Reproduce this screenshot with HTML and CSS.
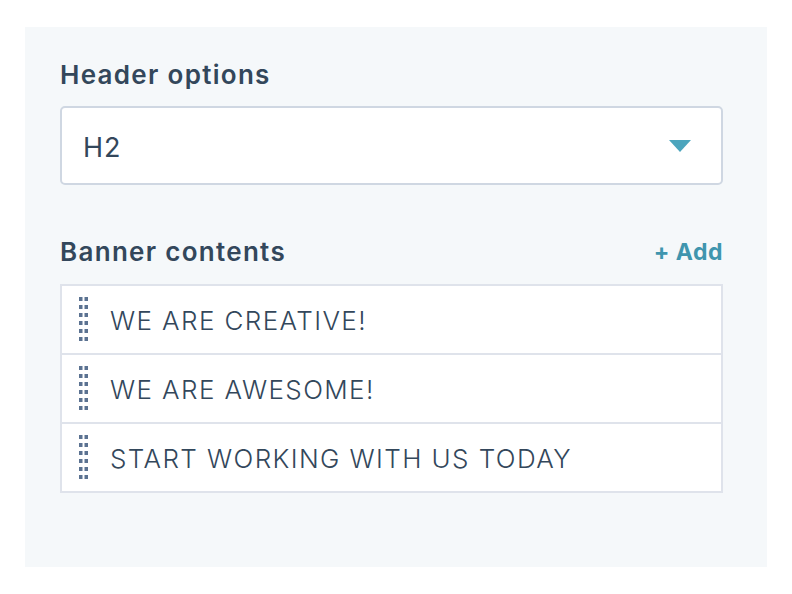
FILE: index.html
```html
<!DOCTYPE html>
<html>
<head>
<meta charset="utf-8">
<link rel="stylesheet" href="styles.css">
</head>
<body>
<div class="panel">
  <div class="field">
    <div class="label">Header options</div>
    <div class="select">
      <span class="select-value">H2</span>
      <svg class="caret" width="22" height="12" viewBox="0 0 22 12"><polygon points="0,0 22,0 11,12" fill="#4ca5bd"/></svg>
    </div>
  </div>
  <div class="field field-list">
    <div class="list-head">
      <div class="label">Banner contents</div>
      <a class="add">+ Add</a>
    </div>
    <ul class="list">
      <li class="item"><svg class="handle" width="10" height="46" viewBox="0 0 10 46"><g fill="#5b7291"><rect x="0" y="0" width="3.5" height="4"/><rect x="5.5" y="0" width="3.5" height="4"/><rect x="0" y="8" width="3.5" height="4"/><rect x="5.5" y="8" width="3.5" height="4"/><rect x="0" y="16" width="3.5" height="4"/><rect x="5.5" y="16" width="3.5" height="4"/><rect x="0" y="24" width="3.5" height="4"/><rect x="5.5" y="24" width="3.5" height="4"/><rect x="0" y="32" width="3.5" height="4"/><rect x="5.5" y="32" width="3.5" height="4"/><rect x="0" y="40" width="3.5" height="4"/><rect x="5.5" y="40" width="3.5" height="4"/></g></svg><span class="item-text">WE ARE CREATIVE!</span></li>
      <li class="item"><svg class="handle" width="10" height="46" viewBox="0 0 10 46"><g fill="#5b7291"><rect x="0" y="0" width="3.5" height="4"/><rect x="5.5" y="0" width="3.5" height="4"/><rect x="0" y="8" width="3.5" height="4"/><rect x="5.5" y="8" width="3.5" height="4"/><rect x="0" y="16" width="3.5" height="4"/><rect x="5.5" y="16" width="3.5" height="4"/><rect x="0" y="24" width="3.5" height="4"/><rect x="5.5" y="24" width="3.5" height="4"/><rect x="0" y="32" width="3.5" height="4"/><rect x="5.5" y="32" width="3.5" height="4"/><rect x="0" y="40" width="3.5" height="4"/><rect x="5.5" y="40" width="3.5" height="4"/></g></svg><span class="item-text">WE ARE AWESOME!</span></li>
      <li class="item"><svg class="handle" width="10" height="46" viewBox="0 0 10 46"><g fill="#5b7291"><rect x="0" y="0" width="3.5" height="4"/><rect x="5.5" y="0" width="3.5" height="4"/><rect x="0" y="8" width="3.5" height="4"/><rect x="5.5" y="8" width="3.5" height="4"/><rect x="0" y="16" width="3.5" height="4"/><rect x="5.5" y="16" width="3.5" height="4"/><rect x="0" y="24" width="3.5" height="4"/><rect x="5.5" y="24" width="3.5" height="4"/><rect x="0" y="32" width="3.5" height="4"/><rect x="5.5" y="32" width="3.5" height="4"/><rect x="0" y="40" width="3.5" height="4"/><rect x="5.5" y="40" width="3.5" height="4"/></g></svg><span class="item-text">START WORKING WITH US TODAY</span></li>
    </ul>
  </div>
</div>
</body>
</html>
```
FILE: styles.css
```css
* { box-sizing: border-box; }
html, body { margin: 0; padding: 0; background: #ffffff; }
body {
  font-family: "Inter", "Lato", sans-serif;
  color: #33475b;
}
.panel {
  margin: 27px 25px 0;
  height: 540px;
  background: #f5f8fa;
  padding: 31px 44px 0 35px;
}
.label {
  font-size: 26px;
  font-weight: 600;
  letter-spacing: 1.3px;
  line-height: 34px;
  height: 34px;
}
.select {
  margin-top: 14px;
  height: 79px;
  background: #fff;
  border: 2px solid #cfd7e2;
  border-radius: 5px;
  display: flex;
  align-items: center;
  justify-content: space-between;
  padding: 0 30px 0 21px;
}
.select-value {
  font-size: 27px;
  font-weight: 400;
  letter-spacing: 1px;
  line-height: 34px;
  padding-top: 4px;
}
.caret { display: block; }
.field-list { margin-top: 50px; }
.list-head {
  display: flex;
  align-items: center;
  justify-content: space-between;
}
.add {
  color: #3f95ae;
  font-size: 23px;
  font-weight: 700;
  letter-spacing: 0.5px;
  line-height: 34px;
}
.list {
  list-style: none;
  margin: 15px 0 0;
  padding: 0;
  border: 2px solid #dfe3eb;
  background: #fff;
}
.item {
  box-sizing: content-box;
  height: 67px;
  display: flex;
  align-items: center;
  padding-left: 17px;
}
.item + .item { border-top: 2px solid #dfe3eb; }
.handle { display: block; flex: none; }
.item-text {
  margin-left: 21px;
  font-size: 26px;
  font-weight: 300;
  letter-spacing: 1.4px;
  line-height: 34px;
  padding-top: 2px;
}
```
